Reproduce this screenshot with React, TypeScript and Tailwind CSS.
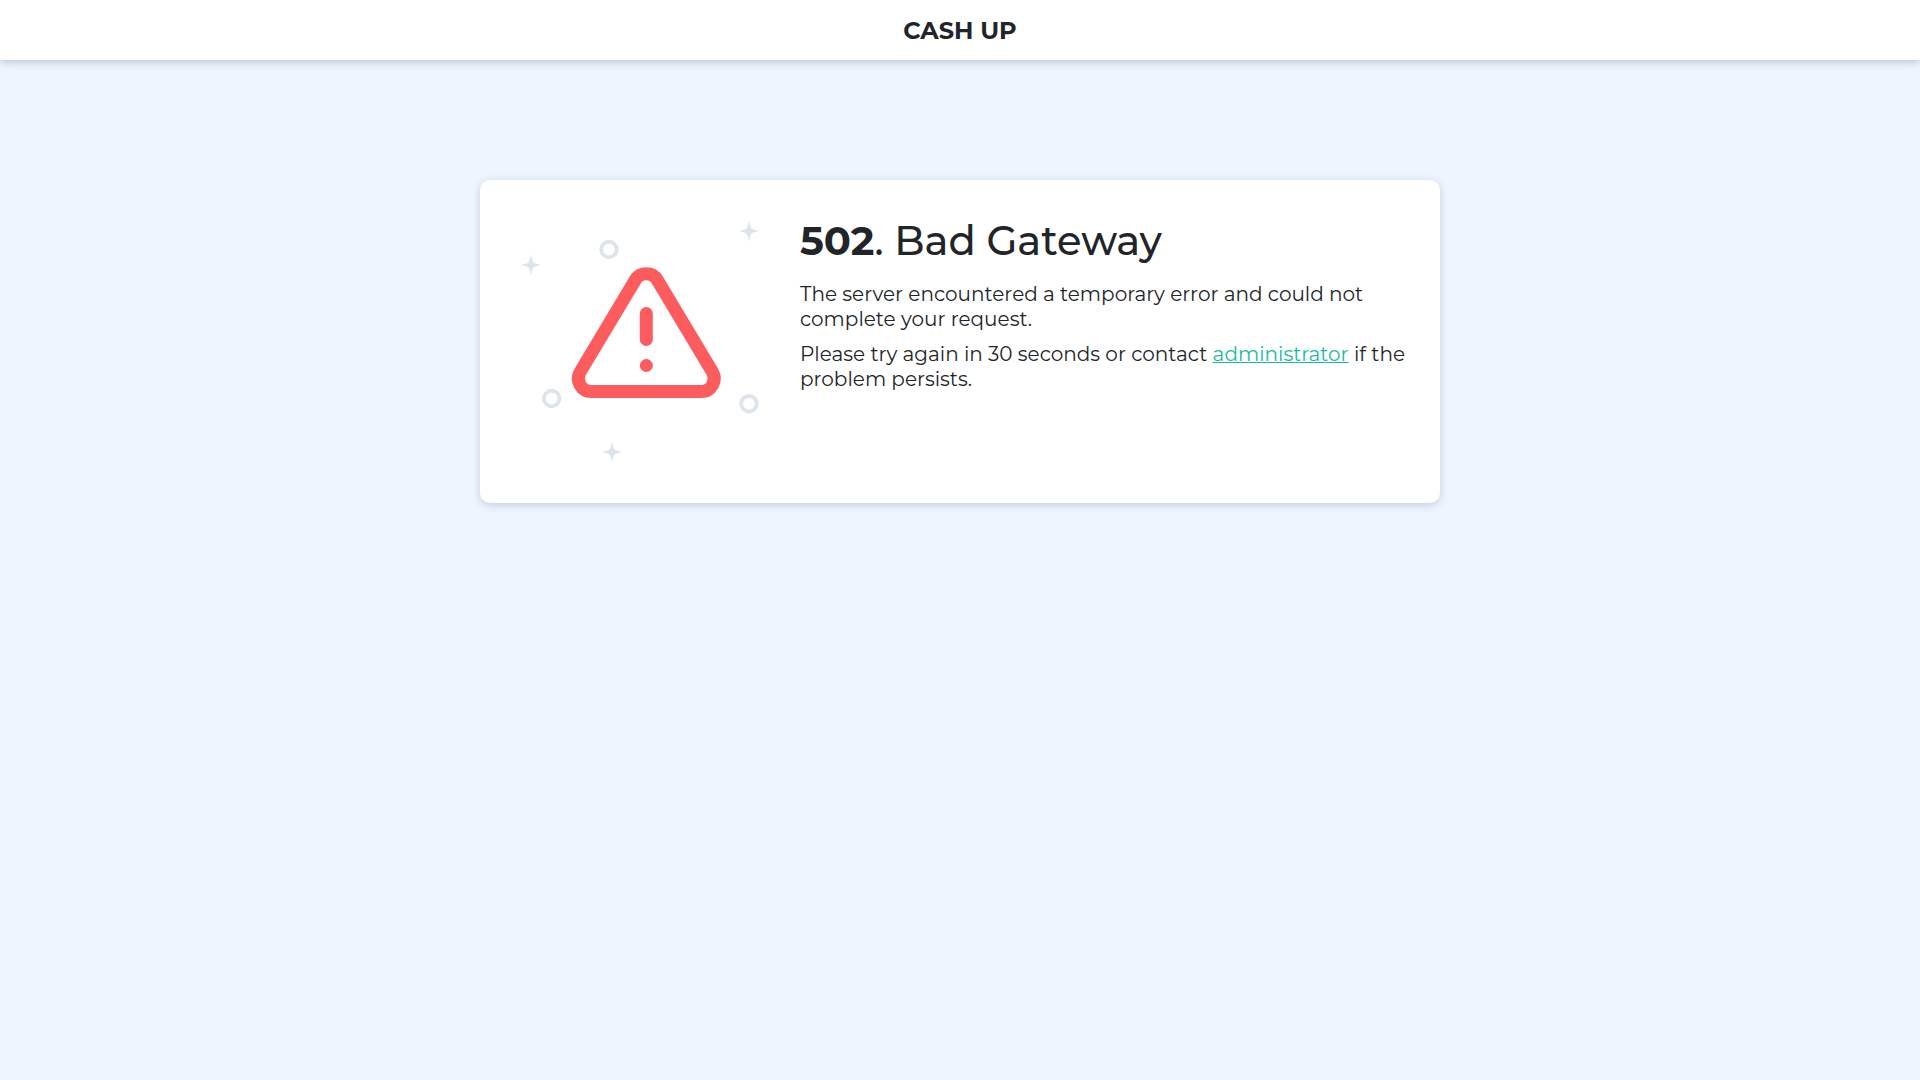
const stars = [
  { x: 11, y: 45 },
  { x: 229, y: 11 },
  { x: 92, y: 232 },
];

const rings = [
  { x: 89, y: 29.5 },
  { x: 31.7, y: 178.5 },
  { x: 229, y: 183.7 },
];

const ErrorIllustration = () => {
  return (
    <svg className="w-60 shrink-0" viewBox="0 0 240 243" fill="none" aria-hidden="true">
      {stars.map(({ x, y }) => (
        <path
          key={`star-${x}`}
          transform={`translate(${x} ${y})`}
          d="M0-10.5Q.8-5 2.5-2.5Q5-.8 10.5 0Q5 .8 2.5 2.5Q.8 5 0 10.5Q-.8 5-2.5 2.5Q-5 .8-10.5 0Q-5-.8-2.5-2.5Q-.8-5 0-10.5Z"
          fill="#dde4eb"
        />
      ))}
      {rings.map(({ x, y }) => (
        <circle key={`ring-${x}`} cx={x} cy={y} r="7.8" stroke="#dde4eb" strokeWidth="3.8" />
      ))}

      {/* Warning triangle */}
      <g
        transform="translate(48.3 35) scale(6.5)"
        stroke="#fc5c5e"
        strokeWidth="2"
        strokeLinecap="round"
        strokeLinejoin="round"
      >
        <path d="M10.29 3.86L1.82 18a2 2 0 0 0 1.71 3h16.94a2 2 0 0 0 1.71-3L13.71 3.86a2 2 0 0 0-3.42 0z" />
        <path d="M12 9v4M12 17h.01" />
      </g>
    </svg>
  );
};

const Header = () => {
  return (
    <header className="flex h-15 items-center justify-center bg-white pt-0.5 text-2xl font-bold shadow-[0_2px_8px_rgba(33,50,80,0.25)]">
      CASH UP
    </header>
  );
};

const App = () => {
  return (
    <div className="min-h-screen bg-[#eef5ff] font-[Montserrat,Inter,sans-serif] text-[#212529]">
      <Header />

      <main className="py-30">
        <section className="mx-auto flex w-1/2 min-w-160 items-start gap-10 rounded-[10px] bg-white py-10 pr-6 pl-10 shadow-[0_2px_8px_rgba(33,50,80,0.2)]">
          <ErrorIllustration />

          <div className="flex-1">
            <h1 className="mb-5 text-[40px] leading-[42px] font-medium">
              <b className="font-bold">502</b>. Bad Gateway
            </h1>
            <p className="mb-2.5 text-xl leading-[25px]">
              The server encountered a temporary error and could not complete your request.
            </p>
            <p className="text-xl leading-[25px]">
              Please try again in 30 seconds or contact{" "}
              <a href="#" className="text-[#1abc9c] underline decoration-1">
                administrator
              </a>{" "}
              if the problem persists.
            </p>
          </div>
        </section>
      </main>
    </div>
  );
};

export default App;
